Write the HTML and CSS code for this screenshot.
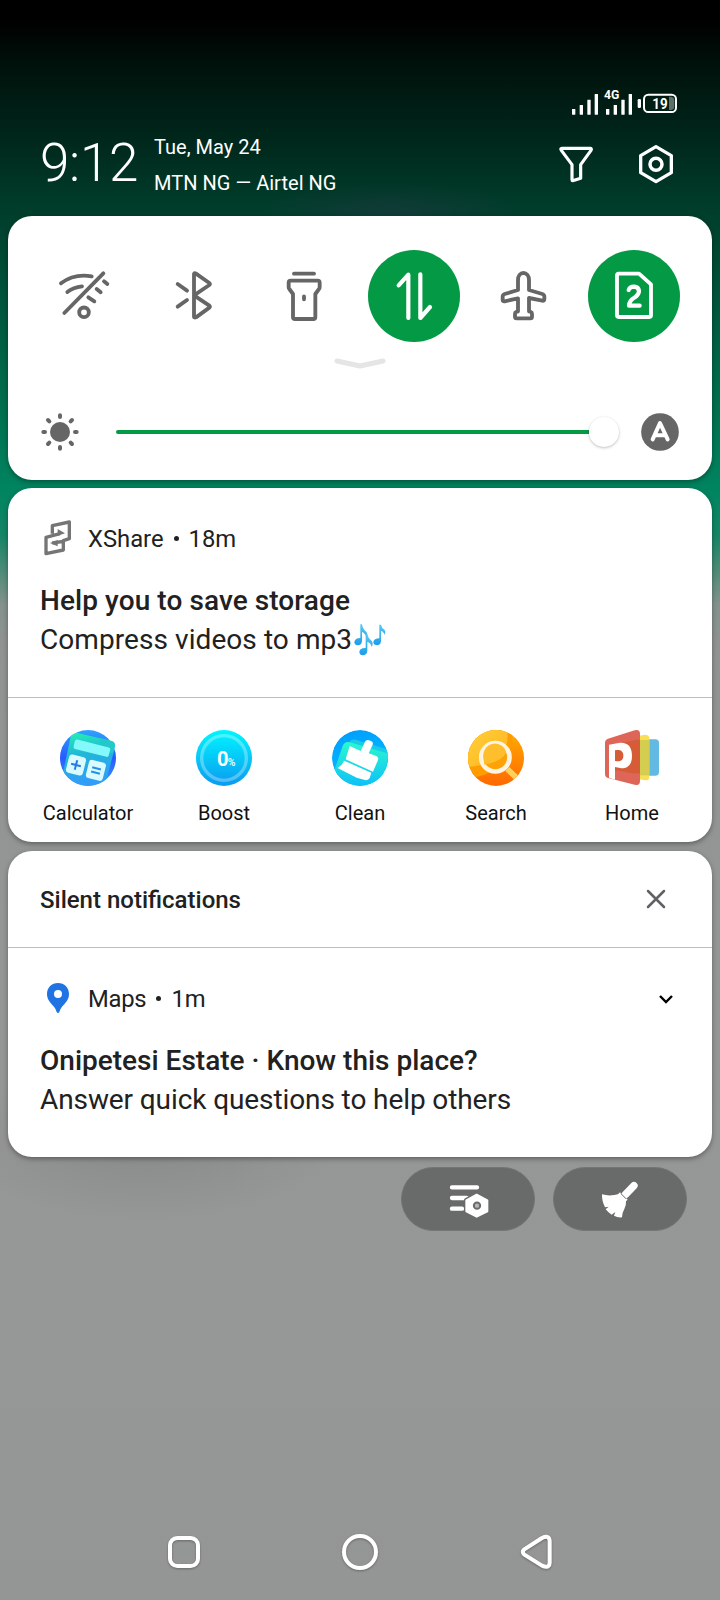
FILE: index.html
```html
<!DOCTYPE html>
<html lang="en">
<head>
<meta charset="utf-8">
<title>Notification shade</title>
<link rel="stylesheet" href="styles.css">
</head>
<body>
<div class="screen">
  <header class="header">
    <div class="status">
      <svg width="112" height="32" viewBox="84 48 336 96" fill="#fff">
        <rect x="96" y="117" width="10" height="17" rx="1"/><rect x="119" y="105" width="10" height="29" rx="1"/><rect x="142" y="89" width="10" height="45" rx="1"/><rect x="164" y="72" width="10" height="62" rx="1"/>
        <rect x="198" y="117" width="10" height="17" rx="1"/><rect x="221" y="105" width="10" height="29" rx="1"/><rect x="244" y="89" width="10" height="45" rx="1"/><rect x="266" y="72" width="10" height="62" rx="1"/>
        <text class="net" x="215" y="87" text-anchor="middle" textLength="46" lengthAdjust="spacingAndGlyphs">4G</text>
        <rect x="293" y="87" width="10" height="27" rx="4"/>
        <rect x="312" y="74" width="96" height="52" rx="13" fill="none" stroke="#fff" stroke-width="6"/>
        <path d="M387 80h8q8 2 8 10v20q0 8-8 10h-8z" fill="#5d6f68"/>
        <text class="level" x="360" y="117" text-anchor="middle" textLength="46" lengthAdjust="spacingAndGlyphs">19</text>
      </svg>
    </div>
    <div class="clock-row">
      <div class="clock">9:12</div>
      <div class="meta"><div class="date">Tue, May 24</div><div class="carrier">MTN NG — Airtel NG</div></div>
      <svg class="filter" width="40" height="40" viewBox="48 221 120 120" fill="none" stroke="#fff" stroke-width="9.500" stroke-linejoin="round"><path d="M66 234H151Q156 235 153 240L122 283V324L98 331Q96 331 96 328V283L64 240Q60 234 66 234Z"/></svg>
      <svg class="gear" width="40" height="40" viewBox="288 221 120 120" fill="none" stroke="#fff" stroke-width="10" stroke-linejoin="round"><path d="M348 229L394 256V307L348 334L302 307V256Z"/><circle cx="348" cy="282" r="18" stroke-width="10.500"/></svg>
    </div>
  </header>

  <section class="card quick">
    <div class="tiles">
      <div class="tile"><svg width="60" height="60" viewBox="162 168 180 180"><path d="M183 220Q222 190 275 199M202 246Q220 232 246 229M193 309L310 190M312 214L322 222M290 237L302 247M265 262L283 274"/><circle cx="252" cy="307" r="14.500"/></svg></div>
      <div class="tile"><svg width="60" height="60" viewBox="492 168 180 180"><path d="M582 256V192Q583 188 588 191L628 219Q631 222 628 225L582 256L628 287Q631 290 628 293L588 322Q583 324 582 320ZM533 222L561 242M533 290L561 270"/></svg></div>
      <div class="tile"><svg width="60" height="60" viewBox="822 168 180 180"><path d="M882 191H942M872 212H953Q959 212 959 218V231Q959 235 957 237L946 252V321Q946 327 940 327H885Q879 327 879 321V252L868 237Q866 235 866 231V218Q866 212 872 212ZM912 259V268"/></svg></div>
      <div class="tile on"><svg width="60" height="60" viewBox="72 168 180 180" stroke-width="12.500"><path d="M116 226L145 194V324M181 193V324L210 291"/></svg></div>
      <div class="tile"><svg width="60" height="60" viewBox="402 168 180 180"><path d="M490 189C500 189 507 198 507 210V240L547 252Q553 254 553 260V267Q553 273 547 272L507 264V304L513 306Q516 307 516 312V320Q516 325 511 325H470Q465 325 465 320V312Q465 307 468 306L474 304V265L434 274Q428 275 428 269V260Q428 254 434 252L474 240V210C474 198 481 189 490 189Z"/></svg></div>
      <div class="tile on"><svg width="60" height="60" viewBox="732 168 180 180"><path d="M776 191H837L873 223V316Q873 321 868 321H776Q771 321 771 316V196Q771 191 776 191Z"/><path stroke-width="12.500" d="M806 240Q809 230 822 230Q836 231 837 243Q837 253 826 261Q807 272 807 287H839"/></svg></div>
    </div>
    <svg class="handle" width="52" height="14" viewBox="0 0 52 14"><path d="M3 4L26 9L49 4" fill="none" stroke="#e5e5e5" stroke-width="5" stroke-linecap="round" stroke-linejoin="round"/></svg>
    <div class="brightness">
      <svg width="40" height="40" viewBox="-60 -60 120 120" stroke="#666" stroke-width="12" stroke-linecap="round"><circle r="30" fill="#666" stroke="none"/><path d="M0-50V-45M0 45V50M-50 0H-45M45 0H50M-36-36L-32-32M32 32L36 36M-36 36L-32 32M32-32L36-36"/></svg>
      <div class="slider"><div class="track"></div><div class="thumb"></div></div>
      <svg width="40" height="40" viewBox="-60 -60 120 120"><circle r="56.500" fill="#666"/><path d="M-22 22L0-27L23 22M-12 10H12" fill="none" stroke="#fff" stroke-width="12" stroke-linecap="round" stroke-linejoin="round"/></svg>
    </div>
  </section>

  <section class="card share">
    <div class="note">
      <div class="app"><svg width="32" height="36" viewBox="120 120 96 108" fill="none" stroke="#757575" stroke-width="10" stroke-linejoin="round"><path d="M157 161V137L208 126V176L190 182V210L138 221V172L180 161M157 189L190 184"/><path d="M173 147L195 160L173 167ZM173 180L150 189L173 199Z" fill="#757575" stroke="none"/></svg><span class="app-name">XShare</span><i class="dot"></i><span>18m</span></div>
      <div class="title help">Help you to save storage</div>
      <div class="text"><span class="msg">Compress videos to mp3</span><svg class="notes" role="img" aria-label="musical notes" width="34" height="34" viewBox="1058 428 102 102"><defs><linearGradient id="n" x2="0" y2="1"><stop stop-color="#55c8f5"/><stop offset="1" stop-color="#1e9cea"/></linearGradient></defs><g fill="url(#n)"><path d="M1080 432H1085Q1087 446 1099 456Q1103 462 1098 472Q1095 458 1085 455V482Q1084 495 1072 495Q1062 494 1062 485Q1064 473 1080 473Z"/><path d="M1096 462H1101Q1103 474 1114 482Q1120 489 1114 500Q1111 487 1101 485V511Q1100 524 1087 525Q1077 523 1077 514Q1079 502 1096 503Z"/><path d="M1137 433H1142Q1143 442 1153 449Q1158 456 1153 464Q1149 453 1142 452V482Q1141 495 1129 495Q1119 493 1119 485Q1121 474 1137 474Z"/></g></svg></div>
    </div>
    <div class="shortcuts">
      <div class="short"><svg width="56" height="56" viewBox="180 120 168 168"><defs><linearGradient id="c1" x2="0" y2="1"><stop stop-color="#2fa2ff"/><stop offset=".5" stop-color="#2859ff"/><stop offset="1" stop-color="#369eff"/></linearGradient><linearGradient id="c2" x2=".15" y2="1"><stop stop-color="#23f3b1"/><stop offset=".45" stop-color="#22b6d8"/><stop offset="1" stop-color="#329cfb"/></linearGradient><clipPath id="cc"><circle cx="264" cy="204" r="84"/></clipPath></defs><circle cx="264" cy="204" r="84" fill="url(#c1)"/><g clip-path="url(#cc)"><path d="M229 128L336 153Q348 158 345 171L314 290H180L212 140Q216 126 229 128Z" fill="url(#c2)"/></g><path d="M300 144L336 153Q347 157 345 170L338 190L300 180Z" fill="#22c9cb"/><rect transform="rotate(14 275 175)" x="221" y="160" width="109" height="29" rx="6" fill="#84f9fb"/><g transform="rotate(14 228 225)"><rect x="202" y="197" width="52" height="56" rx="9" fill="#d9faff"/><path d="M228 210V240M213 225H243" stroke="#2878e6" stroke-width="6"/></g><g transform="rotate(14 288 240)"><rect x="262" y="213" width="52" height="56" rx="9" fill="#d9faff"/><path d="M275 235H302M275 248H302" stroke="#248fe6" stroke-width="6"/></g></svg><span>Calculator</span></div>
      <div class="short"><svg width="56" height="56" viewBox="588 120 168 168"><defs><linearGradient id="b" x2="0" y2="1"><stop stop-color="#00f6ff"/><stop offset="1" stop-color="#0b9af0"/></linearGradient></defs><circle cx="672" cy="204" r="84" fill="url(#b)"/><circle cx="672" cy="204" r="67" fill="none" stroke="#fff" stroke-opacity=".3" stroke-width="10"/><text class="zero" x="651" y="227">0</text><text class="pct" x="683" y="227" textLength="23" lengthAdjust="spacingAndGlyphs">%</text></svg><span>Boost</span></div>
      <div class="short"><svg width="56" height="56" viewBox="996 120 168 168"><defs><linearGradient id="k" x2="0" y2="1"><stop stop-color="#2bf8ce"/><stop offset="1" stop-color="#0bbcfb"/></linearGradient><linearGradient id="k2" x2=".3" y2="1"><stop stop-color="#009bfc"/><stop offset=".4" stop-color="#00aaff"/><stop offset="1" stop-color="#12bdf7"/></linearGradient><clipPath id="kc"><circle cx="1080" cy="204" r="84"/></clipPath></defs><g clip-path="url(#kc)"><circle cx="1080" cy="204" r="84" fill="url(#k2)"/><path d="M1048 156Q1054 146 1070 150L1170 180V250Z" fill="#16cce7"/><path d="M1028 168Q1033 154 1047 156L1161 190Q1168 195 1164 205L1140 300H1040L1000 250Z" fill="url(#k)"/></g><path d="M1049 168L1082 183L1095 155Q1099 148 1107 151L1113 153Q1121 157 1118 164L1106 190L1129 198Q1137 202 1134 210L1119 245L1037 208ZM1032 212L1114 248L1109 264Q1105 272 1095 270L1070 263L1013 234Q1027 227 1032 212Z" fill="#fff"/></svg><span>Clean</span></div>
      <div class="short"><svg width="56" height="56" viewBox="204 120 168 168"><defs><linearGradient id="s" x2="0" y2="1"><stop stop-color="#ffae00"/><stop offset="1" stop-color="#ff6800"/></linearGradient><linearGradient id="s2" x2="1" y2="1"><stop stop-color="#ffd13b"/><stop offset="1" stop-color="#ffb11c"/></linearGradient><clipPath id="sc"><circle cx="288" cy="204" r="84"/></clipPath></defs><g clip-path="url(#sc)"><rect x="204" y="120" width="168" height="168" fill="url(#s)"/><path d="M338 120Q340 250 204 265V120Z" fill="#ff9d00"/><path d="M322 120Q334 220 204 231V120Z" fill="url(#s2)"/><path d="M322 237L348 262" stroke="#ffd15b" stroke-width="17"/></g><circle cx="286" cy="202" r="42.500" fill="#ffa208" stroke="#fff4df" stroke-width="14"/><path d="M253 224Q305 216 319 187A35 35 0 0 0 251 205Q251 216 253 224Z" fill="#ffbf2c"/></svg><span>Search</span></div>
      <div class="short"><svg width="56" height="56" viewBox="612 120 168 168"><rect x="735" y="148" width="42" height="109" rx="11" fill="#62b9e2"/><path d="M700 140L735 134Q748 134 748 146V260Q748 272 735 271L700 264Z" fill="#f8df55"/><path d="M720 150H748V256H720Z" fill="#d4cd50"/><path d="M624 146L704 121Q720 117 720 132V273Q720 288 704 284L624 264Q615 261 615 252V158Q615 149 624 146Z" fill="#de6659"/><path d="M645 163L710 149Q720 147 720 155V250Q705 253 645 240Z" fill="#d65c38"/><path fill-rule="evenodd" d="M627 164L660 158C686 157 696 173 696 197C696 221 686 235 664 235L645 231V269L627 263ZM645 181V213C662 216 670 210 670 197C670 184 662 178 645 181Z" fill="#fff"/></svg><span>Home</span></div>
    </div>
  </section>

  <section class="card silent">
    <div class="silent-head"><span class="silent-title">Silent notifications</span><svg width="24" height="24" viewBox="0 0 24 24"><path d="M4 4L20 20M20 4L4 20" stroke="#5f6165" stroke-width="2.500" stroke-linecap="round"/></svg></div>
    <div class="note">
      <div class="app"><svg width="32" height="36" viewBox="120 390 96 108"><path fill-rule="evenodd" d="M174 399C193 399 207 413 207 432C207 451 194 460 185 472Q180 478 178 486Q174 492 170 486Q168 478 163 472C154 460 141 451 141 432C141 413 155 399 174 399ZM174 420A12 12 0 1 0 174 444A12 12 0 1 0 174 420Z" fill="#1f73e3"/></svg><span class="app-name maps">Maps</span><i class="dot"></i><span>1m</span><svg class="expand" width="18" height="12" viewBox="0 0 18 12"><path d="M3 3L9 9L15 3" fill="none" stroke="#000" stroke-width="2.400"/></svg></div>
      <div class="title place">Onipetesi Estate · Know this place?</div>
      <div class="text"><span class="ask">Answer quick questions to help others</span></div>
    </div>
  </section>

  <div class="actions">
    <div class="pill"><svg width="44" height="44" viewBox="258 984 132 132"><path d="M276 1015H351M276 1047H320M276 1079H306" stroke="#fff" stroke-width="13" stroke-linecap="round"/><path d="M350 1036L382 1053V1088L350 1104L318 1088V1053Z" fill="#fff" stroke="#696b6a" stroke-width="12" stroke-linejoin="round"/><path d="M350 1037L382 1054V1087L350 1103L319 1087V1054Z" fill="#fff" stroke="#fff" stroke-width="6" stroke-linejoin="round"/><circle cx="351" cy="1070" r="9.500" fill="#b5b5b5" stroke="#696b6a" stroke-width="6"/></svg></div>
    <div class="pill"><svg width="44" height="44" viewBox="714 984 132 132" fill="#fff"><path d="M796 1037L822 1010" stroke="#fff" stroke-width="22" stroke-linecap="round"/><path d="M780 1030L803 1052L796 1058L774 1036Z"/><path d="M782 1033L798 1049" stroke="#696b6a" stroke-width="3"/><path d="M777 1035L798 1055Q799 1068 793 1080Q786 1092 786 1105Q772 1106 762 1100L766 1089L755 1097Q744 1090 737 1081L746 1073L735 1075Q725 1055 726 1036Q750 1043 777 1035Z"/></svg></div>
  </div>

  <nav class="nav">
    <svg width="40" height="40" viewBox="-60 -60 120 120"><rect x="-42" y="-42" width="84" height="84" rx="22"/></svg>
    <svg width="40" height="40" viewBox="-60 -60 120 120"><circle r="48"/></svg>
    <svg width="40" height="40" viewBox="1188 96 120 120"><path d="M1213 148L1266 114Q1288 104 1289 123V188Q1288 207 1266 197L1213 164Q1204 156 1213 148Z"/></svg>
  </nav>
</div>
</body>
</html>
```
FILE: styles.css
```css
* { box-sizing: border-box; }
body { margin: 0; font-family: Roboto, "Liberation Sans", sans-serif; color: #212121; }
svg { display: block; flex: none; }
.screen {
  width: 720px; height: 1600px; display: flex; flex-direction: column; overflow: hidden;
  background:
    radial-gradient(ellipse 130px 32px at 390px 214px, rgba(45, 55, 75, .4), transparent),
    radial-gradient(ellipse 190px 80px at 145px 1140px, rgba(110, 110, 110, .32), transparent),
    linear-gradient(#000 0, #000 20px, #00130d 70px, #002419 130px, #003b2a 200px, #00402d 220px, #005a40 320px, #007351 420px, #008460 490px, #158566 535px, #4e8b77 570px, #84928d 605px, #919392 650px, #949695 900px, #969897 1300px, #949695 1600px);
}
.header { height: 216px; padding: 86px 40px 0; color: #fff; }
.status { display: flex; justify-content: flex-end; }
.net { font: 700 40px Roboto, sans-serif; }
.level { font: 700 46px Roboto, sans-serif; }
.clock-row { display: flex; height: 92px; padding-top: 14px; }
.clock { width: 114px; font-size: 53px; font-weight: 300; line-height: 62px; letter-spacing: -.3px; white-space: nowrap; }
.meta { flex: 1; font-size: 20px; line-height: 36px; margin-top: -3px; }
.carrier { letter-spacing: .04px; }
.filter, .gear { margin-top: 12px; }
.gear { margin-left: 40px; margin-right: 4px; }
.card { margin: 0 8px; border-radius: 24px; background: #fff; box-shadow: 0 2px 5px rgba(0, 0, 0, .35); flex: none; }
.quick { height: 264px; padding-top: 34px; }
.tiles { display: grid; grid-template-columns: repeat(6, 110px); justify-items: center; padding-left: 21px; }
.tile { width: 92px; height: 92px; border-radius: 50%; display: grid; place-items: center; fill: none; stroke: #666; stroke-width: 11.5px; stroke-linecap: round; stroke-linejoin: round; }
.on { background: #049a45; stroke: #fff; }
.handle { margin: 15px auto 0; }
.brightness { display: flex; align-items: center; margin-top: 41px; padding: 0 32px; }
.slider { display: flex; align-items: center; flex: 1; margin: 0 21px 0 36px; }
.track { flex: 1; height: 4px; border-radius: 2px 0 0 2px; background: #049a45; }
.thumb { width: 30px; height: 30px; border-radius: 50%; background: #fff; box-shadow: 0 1px 3px rgba(0, 0, 0, .25); }
.share { height: 354px; margin-top: 8px; }
.note { padding: 32px 32px 0; }
.share .note { height: 209px; }
.app { display: flex; align-items: center; height: 36px; font-size: 24px; }
.app span { padding-top: 2px; font-size: 23.8px; }
.app-name { margin-left: 16px; }
.maps { letter-spacing: -.25px; }
.dot { width: 5px; height: 5px; border-radius: 50%; background: #212121; margin: 1px 10px 0 10px; }
.expand { margin: 1px 5px 0 auto; }
.title { margin-top: 25px; font-size: 28px; line-height: 40px; font-weight: 500; white-space: nowrap; }
.help { letter-spacing: .08px; }
.text { display: flex; font-size: 28px; line-height: 38px; }
.msg { letter-spacing: .07px; }
.ask { letter-spacing: -.1px; }
.notes { margin-top: 2px; margin-left: 1px; }
.shortcuts { border-top: 1px solid #bdbdbd; padding: 32px 12px 0; display: grid; grid-template-columns: repeat(5, 136px); font-size: 20px; color: #111; }
.short { display: flex; flex-direction: column; align-items: center; line-height: 24px; gap: 15px; }
.zero { font: 700 60px Roboto, sans-serif; fill: #fff; }
.pct { font: 500 30px Roboto, sans-serif; fill: #fff; }
.silent { height: 306px; margin-top: 9px; }
.silent-head { height: 97px; border-bottom: 1px solid #bdbdbd; display: flex; align-items: center; justify-content: space-between; padding: 0 44px 0 32px; font-size: 24px; font-weight: 500; }
.silent-title { padding-top: 2px; }
.actions { display: flex; justify-content: flex-end; gap: 18px; padding: 10px 33px 0 0; }
.pill { width: 134px; height: 64px; border-radius: 32px; border: 1px solid #747675; background: #696b6a; display: grid; place-items: center; }
.nav { margin-top: auto; padding: 0 164px 28px; display: flex; justify-content: space-between; fill: none; stroke: #fff; stroke-width: 12px; stroke-linejoin: round; filter: drop-shadow(0 1px 1px rgba(0, 0, 0, .3)); }
```
